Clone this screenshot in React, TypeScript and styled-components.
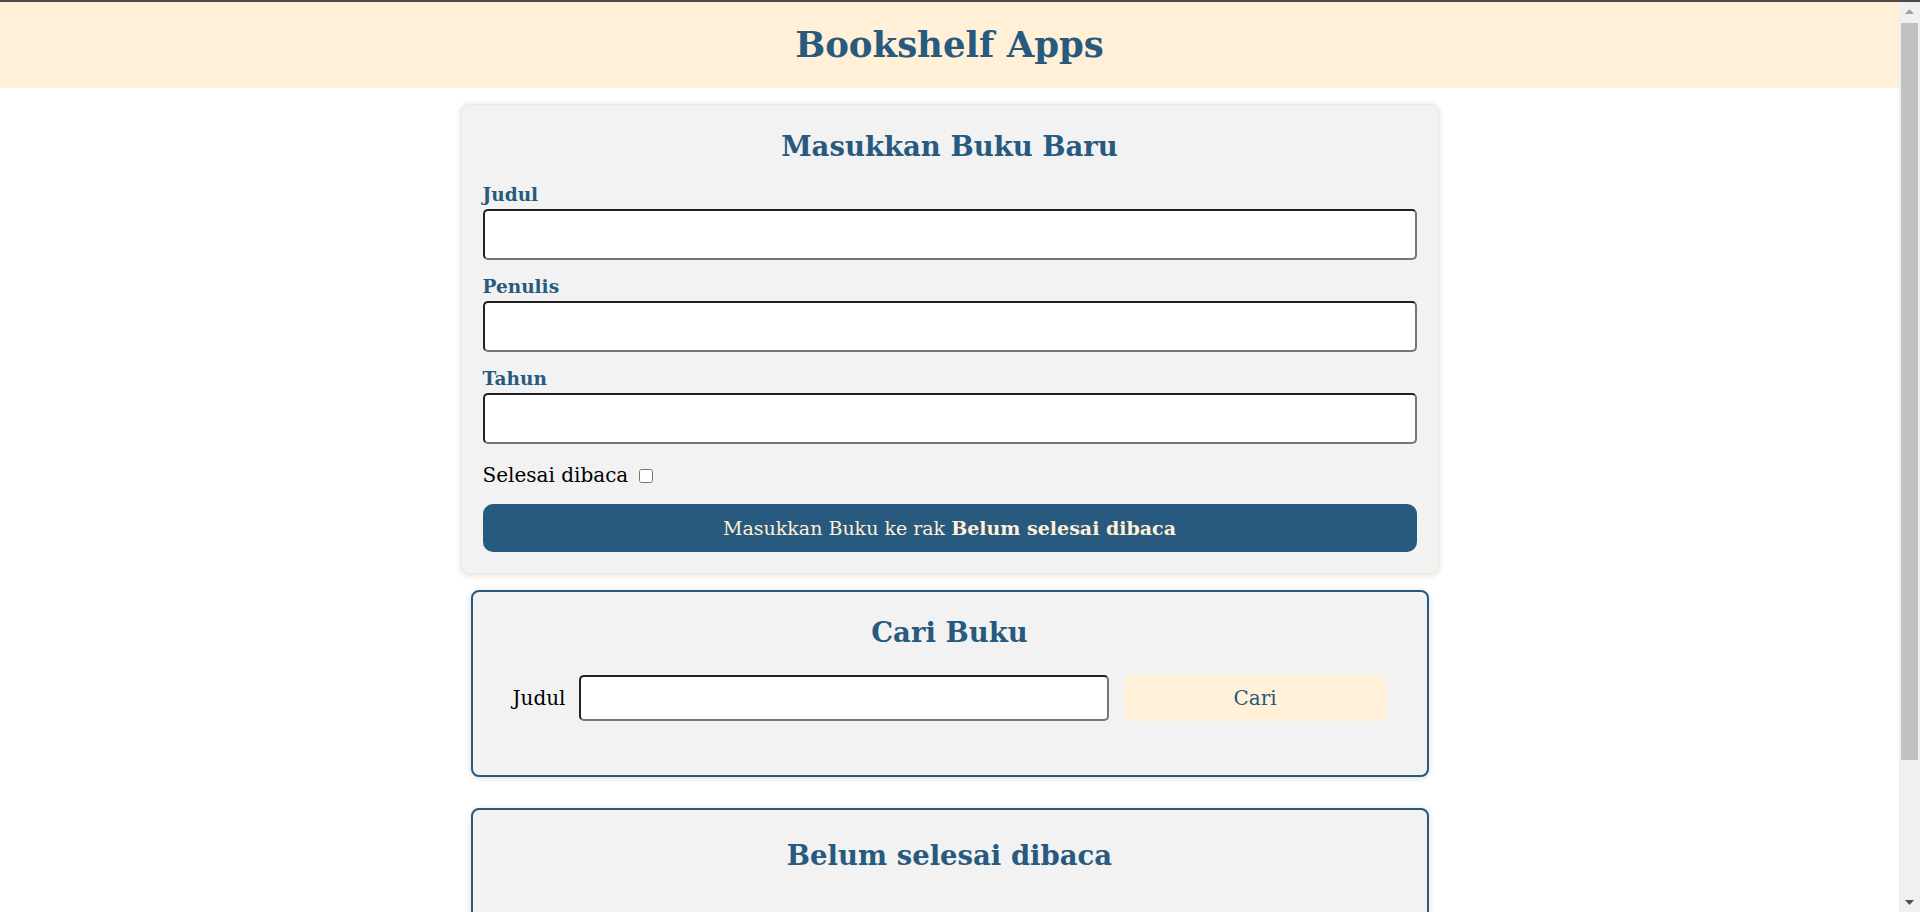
import React from "react";
import styled, { createGlobalStyle } from "styled-components";

const BLUE = "#275a7e";
const CREAM = "#fff0d7";
const FONT = `"DejaVu Serif", "Liberation Serif", serif`;
const SCROLLBAR_W = 21;

const GlobalStyle = createGlobalStyle`
  *, *::before, *::after { box-sizing: border-box; }
  html, body { margin: 0; padding: 0; background: #ffffff; }
  body { font-family: ${FONT}; color: #000; }
`;

const Page = styled.div`
  padding-right: ${SCROLLBAR_W}px;
  border-top: 2px solid #4d4a46;
`;

const Header = styled.header`
  height: 86px;
  background: ${CREAM};
  display: flex;
  align-items: center;
  justify-content: center;
  padding-bottom: 1px;
`;

const AppTitle = styled.h1`
  margin: 0;
  font-size: 35.5px;
  line-height: 42px;
  font-weight: 700;
  color: ${BLUE};
`;

const Main = styled.main`
  display: flex;
  flex-direction: column;
  align-items: center;
  padding: 16px 0 8px;
`;

const Card = styled.section<{ $variant: "form" | "outlined"; $top?: number; $bottom?: number; $gapAfter?: number }>`
  background: #f2f2f2;
  border-radius: 8px;
  width: ${(p) => (p.$variant === "form" ? "978px" : "958px")};
  border: ${(p) => (p.$variant === "form" ? "1px solid #f6e8cf" : `2px solid ${BLUE}`)};
  box-shadow: 0 1px 6px rgba(0, 0, 0, 0.14);
  padding: ${(p) => `${p.$top ?? 0}px ${p.$variant === "form" ? 21 : 40}px ${p.$bottom ?? 0}px`};
  margin-bottom: ${(p) => p.$gapAfter ?? 0}px;
`;

const SectionTitle = styled.h2`
  margin: 0;
  font-size: 27.5px;
  line-height: 37px;
  font-weight: 700;
  color: ${BLUE};
  text-align: center;
`;

const Form = styled.form`
  display: flex;
  flex-direction: column;
  gap: 15px;
`;

const FormHead = styled.div`
  margin-bottom: 3px;
`;

const Field = styled.div`
  display: flex;
  flex-direction: column;
  gap: 2px;
`;

const FieldLabel = styled.label`
  font-size: 18.5px;
  line-height: 24px;
  font-weight: 700;
  color: ${BLUE};
`;

const TextInput = styled.input<{ $h: number }>`
  display: block;
  width: 100%;
  height: ${(p) => p.$h}px;
  border: 2px inset rgb(118, 118, 118);
  border-radius: 5px;
  background: #fff;
  font-family: ${FONT};
  font-size: 17px;
  padding: 0 8px;
  outline: none;
`;

const CheckRow = styled.div`
  margin-top: 4px;
  font-size: 20px;
  line-height: 24px;
  color: #000;
`;

const CheckBox = styled.input`
  margin: 0 0 0 11px;
  width: 14px;
  height: 14px;
  vertical-align: -1px;
`;

const SubmitButton = styled.button`
  margin-top: 2px;
  height: 48px;
  width: 100%;
  border: none;
  border-radius: 10px;
  background: ${BLUE};
  color: ${CREAM};
  font-family: ${FONT};
  font-size: 19px;
  cursor: pointer;

  strong {
    font-weight: 700;
  }
`;

const SearchForm = styled.form`
  margin-top: 24px;
  display: flex;
  align-items: center;
  gap: 12px;
`;

const SearchLabel = styled.label`
  flex: 0 0 54px;
  font-size: 20px;
  line-height: 24px;
  font-weight: 400;
  color: #000;
  white-space: nowrap;
`;

const SearchInputWrap = styled.div`
  flex: 0 0 530px;
  margin-right: 3px;
`;

const SearchButton = styled.button`
  flex: 1 1 0;
  height: 46px;
  border: none;
  border-radius: 10px;
  background: ${CREAM};
  color: ${BLUE};
  font-family: ${FONT};
  font-size: 20px;
  cursor: pointer;
`;

const BookList = styled.div`
  min-height: 0;
`;

/* Window scrollbar drawn over the right edge of the viewport */
const Scrollbar = styled.div`
  position: fixed;
  top: 0;
  right: 0;
  bottom: 0;
  width: ${SCROLLBAR_W}px;
  background: #f0f0f0;
  border-top: 2px solid #4d4a46;
  display: flex;
  flex-direction: column;
`;

const ScrollArrow = styled.div`
  flex: 0 0 19px;
  display: flex;
  align-items: center;
  justify-content: center;
`;

const ScrollTrack = styled.div`
  flex: 1 1 auto;
  padding: 2px 2px 0 2px;
`;

const ScrollThumb = styled.div`
  height: 737px;
  background: #c1c1c1;
`;

export default function App() {
  return (
    <>
      <GlobalStyle />
      <Page>
        <Header>
          <AppTitle>Bookshelf Apps</AppTitle>
        </Header>
        <Main>
          <Card $variant="form" $top={23} $bottom={21} $gapAfter={16}>
            <Form onSubmit={(e) => e.preventDefault()}>
              <FormHead>
                <SectionTitle>Masukkan Buku Baru</SectionTitle>
              </FormHead>
              <Field>
                <FieldLabel htmlFor="inputBookTitle">Judul</FieldLabel>
                <TextInput id="inputBookTitle" type="text" $h={51} />
              </Field>
              <Field>
                <FieldLabel htmlFor="inputBookAuthor">Penulis</FieldLabel>
                <TextInput id="inputBookAuthor" type="text" $h={51} />
              </Field>
              <Field>
                <FieldLabel htmlFor="inputBookYear">Tahun</FieldLabel>
                <TextInput id="inputBookYear" type="number" $h={51} />
              </Field>
              <CheckRow>
                <label htmlFor="inputBookIsComplete">Selesai dibaca</label>
                <CheckBox id="inputBookIsComplete" type="checkbox" />
              </CheckRow>
              <SubmitButton type="submit">
                Masukkan Buku ke rak <strong>Belum selesai dibaca</strong>
              </SubmitButton>
            </Form>
          </Card>

          <Card $variant="outlined" $top={22} $bottom={54} $gapAfter={31}>
            <SectionTitle>Cari Buku</SectionTitle>
            <SearchForm onSubmit={(e) => e.preventDefault()}>
              <SearchLabel htmlFor="searchBookTitle">Judul</SearchLabel>
              <SearchInputWrap>
                <TextInput id="searchBookTitle" type="text" $h={46} />
              </SearchInputWrap>
              <SearchButton type="submit">Cari</SearchButton>
            </SearchForm>
          </Card>

          <Card $variant="outlined" $top={27} $bottom={52} $gapAfter={31}>
            <SectionTitle>Belum selesai dibaca</SectionTitle>
            <BookList id="incompleteBookshelfList" />
          </Card>

          <Card $variant="outlined" $top={27} $bottom={52}>
            <SectionTitle>Selesai dibaca</SectionTitle>
            <BookList id="completeBookshelfList" />
          </Card>
        </Main>
      </Page>

      <Scrollbar aria-hidden="true">
        <ScrollArrow>
          <svg width="9" height="5" viewBox="0 0 9 5">
            <polygon points="4.5,0 9,5 0,5" fill="#a3a3a3" />
          </svg>
        </ScrollArrow>
        <ScrollTrack>
          <ScrollThumb />
        </ScrollTrack>
        <ScrollArrow>
          <svg width="9" height="5" viewBox="0 0 9 5">
            <polygon points="0,0 9,0 4.5,5" fill="#505050" />
          </svg>
        </ScrollArrow>
      </Scrollbar>
    </>
  );
}
